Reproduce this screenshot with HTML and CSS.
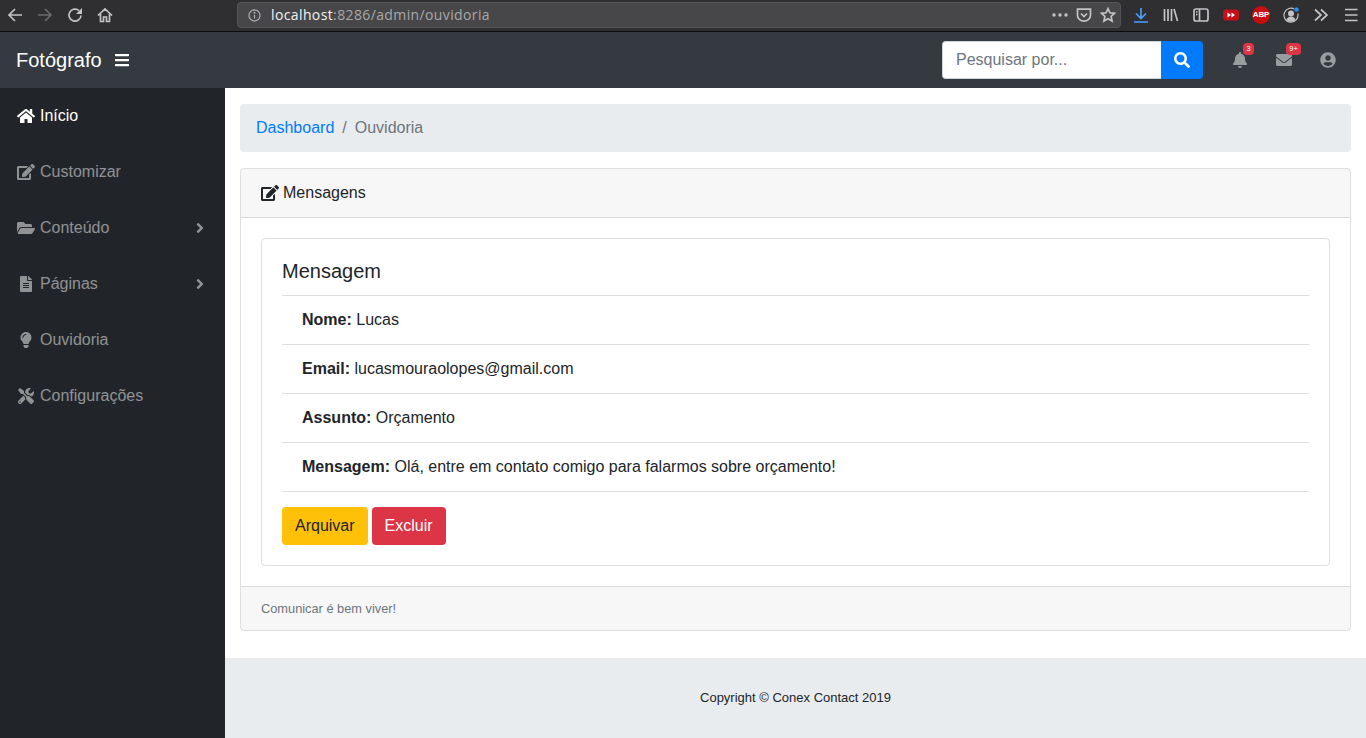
FILE: index.html
```html
<!DOCTYPE html>
<html lang="pt-BR">
<head>
<meta charset="utf-8">
<title>Ouvidoria</title>
<link rel="stylesheet" href="styles.css">
</head>
<body>
<svg class="sprite" xmlns="http://www.w3.org/2000/svg">
<symbol id="i-bars" viewBox="0 0 448 512"><path d="M16 132h416c8.837 0 16-7.163 16-16V76c0-8.837-7.163-16-16-16H16C7.163 60 0 67.163 0 76v40c0 8.837 7.163 16 16 16zm0 160h416c8.837 0 16-7.163 16-16v-40c0-8.837-7.163-16-16-16H16c-8.837 0-16 7.163-16 16v40c0 8.837 7.163 16 16 16zm0 160h416c8.837 0 16-7.163 16-16v-40c0-8.837-7.163-16-16-16H16c-8.837 0-16 7.163-16 16v40c0 8.837 7.163 16 16 16z"/></symbol>
<symbol id="i-search" viewBox="0 0 512 512"><path d="M505 442.7L405.3 343c-4.5-4.5-10.6-7-17-7H372c27.6-35.3 44-79.7 44-128C416 93.1 322.9 0 208 0S0 93.1 0 208s93.1 208 208 208c48.3 0 92.7-16.4 128-44v16.3c0 6.4 2.5 12.5 7 17l99.7 99.7c9.4 9.4 24.6 9.4 33.9 0l28.3-28.3c9.4-9.4 9.4-24.6.1-34zM208 336c-70.7 0-128-57.2-128-128 0-70.7 57.2-128 128-128 70.7 0 128 57.2 128 128 0 70.7-57.2 128-128 128z"/></symbol>
<symbol id="i-bell" viewBox="0 0 448 512"><path d="M224 512c35.32 0 63.97-28.65 63.97-64H160.03c0 35.35 28.65 64 63.97 64zm215.39-149.71c-19.32-20.76-55.47-51.99-55.47-154.29 0-77.7-54.48-139.9-127.94-155.16V32c0-17.67-14.32-32-31.98-32s-31.98 14.33-31.98 32v20.84C118.56 68.1 64.08 130.3 64.08 208c0 102.3-36.15 133.53-55.47 154.29-6 6.45-8.66 14.16-8.61 21.71.11 16.4 12.98 32 32.1 32h383.8c19.12 0 32-15.6 32.1-32 .05-7.55-2.61-15.27-8.61-21.71z"/></symbol>
<symbol id="i-envelope" viewBox="0 0 512 512"><path d="M502.3 190.8c3.9-3.1 9.7-.2 9.7 4.7V400c0 26.5-21.5 48-48 48H48c-26.5 0-48-21.5-48-48V195.6c0-5 5.7-7.8 9.7-4.7 22.4 17.4 52.1 39.5 154.1 113.6 21.1 15.4 56.7 47.8 92.2 47.6 35.7.3 72-32.8 92.3-47.6 102-74.1 131.6-96.3 154-113.7zM256 320c23.2.4 56.6-29.2 73.4-41.4 132.7-96.3 142.8-104.7 173.4-128.7 5.8-4.5 9.2-11.5 9.2-18.9v-19c0-26.5-21.5-48-48-48H48C21.5 64 0 85.5 0 112v19c0 7.4 3.4 14.3 9.2 18.9 30.6 23.9 40.7 32.4 173.4 128.7 16.8 12.2 50.2 41.8 73.4 41.4z"/></symbol>
<symbol id="i-user" viewBox="0 0 496 512"><path d="M248 8C111 8 0 119 0 256s111 248 248 248 248-111 248-248S385 8 248 8zm0 96c48.6 0 88 39.4 88 88s-39.4 88-88 88-88-39.4-88-88 39.4-88 88-88zm0 344c-58.7 0-111.3-26.6-146.5-68.2 18.8-35.4 55.6-59.8 98.5-59.8 2.4 0 4.8.4 7.1 1.1 13 4.2 26.6 6.9 40.9 6.9 14.3 0 28-2.7 40.9-6.9 2.3-.7 4.7-1.1 7.1-1.1 42.9 0 79.7 24.4 98.5 59.8C359.3 421.4 306.7 448 248 448z"/></symbol>
<symbol id="i-home" viewBox="0 0 576 512"><path d="M280.37 148.26L96 300.11V464a16 16 0 0 0 16 16l112.06-.29a16 16 0 0 0 15.92-16V368a16 16 0 0 1 16-16h64a16 16 0 0 1 16 16v95.64a16 16 0 0 0 16 16.05L464 480a16 16 0 0 0 16-16V300L295.67 148.26a12.19 12.19 0 0 0-15.3 0zM571.6 251.47L488 182.56V44.05a12 12 0 0 0-12-12h-56a12 12 0 0 0-12 12v72.61L318.47 43a48 48 0 0 0-61 0L4.34 251.47a12 12 0 0 0-1.6 16.9l25.5 31A12 12 0 0 0 45.15 301l235.22-193.74a12.19 12.19 0 0 1 15.3 0L530.9 301a12 12 0 0 0 16.9-1.6l25.5-31a12 12 0 0 0-1.7-16.93z"/></symbol>
<symbol id="i-edit" viewBox="0 0 576 512"><path d="M402.6 83.2l90.2 90.2c3.8 3.8 3.8 10 0 13.8L274.4 405.6l-92.8 10.3c-12.4 1.4-22.9-9.1-21.5-21.5l10.3-92.8L388.8 83.2c3.8-3.8 10-3.8 13.8 0zm162-22.9l-48.8-48.8c-15.2-15.2-39.9-15.2-55.2 0l-35.4 35.4c-3.8 3.8-3.8 10 0 13.8l90.2 90.2c3.8 3.8 10 3.8 13.8 0l35.4-35.4c15.2-15.3 15.2-40 0-55.2zM384 346.2V448H64V128h229.8c3.2 0 6.2-1.3 8.5-3.5l40-40c7.6-7.6 2.2-20.5-8.5-20.5H48C21.5 64 0 85.5 0 112v352c0 26.5 21.5 48 48 48h352c26.5 0 48-21.5 48-48V306.2c0-10.7-12.9-16-20.5-8.5l-40 40c-2.2 2.3-3.5 5.3-3.5 8.5z"/></symbol>
<symbol id="i-folder" viewBox="0 0 576 512"><path d="M572.694 292.093L500.27 416.248A63.997 63.997 0 0 1 444.989 448H45.025c-18.523 0-30.064-20.093-20.731-36.093l72.424-124.155A64 64 0 0 1 152 256h399.964c18.523 0 30.064 20.093 20.73 36.093zM152 224h328v-48c0-26.51-21.49-48-48-48H272l-64-64H48C21.49 64 0 85.49 0 112v278.046l69.077-118.418C86.214 242.25 117.989 224 152 224z"/></symbol>
<symbol id="i-file" viewBox="0 0 384 512"><path d="M224 136V0H24C10.7 0 0 10.7 0 24v464c0 13.3 10.7 24 24 24h336c13.3 0 24-10.7 24-24V160H248c-13.2 0-24-10.8-24-24zm64 236c0 6.6-5.4 12-12 12H108c-6.6 0-12-5.4-12-12v-8c0-6.6 5.4-12 12-12h168c6.6 0 12 5.4 12 12v8zm0-64c0 6.6-5.4 12-12 12H108c-6.6 0-12-5.4-12-12v-8c0-6.6 5.4-12 12-12h168c6.6 0 12 5.4 12 12v8zm0-72v8c0 6.6-5.4 12-12 12H108c-6.6 0-12-5.4-12-12v-8c0-6.6 5.4-12 12-12h168c6.6 0 12 5.4 12 12zm96-114.1v6.1H256V0h6.1c6.4 0 12.5 2.5 17 7l97.9 98c4.5 4.5 7 10.6 7 16.9z"/></symbol>
<symbol id="i-bulb" viewBox="0 0 352 512"><path d="M96.06 454.35c.01 6.29 1.87 12.45 5.36 17.69l17.09 25.69a31.99 31.99 0 0 0 26.64 14.28h61.71a31.99 31.99 0 0 0 26.64-14.28l17.09-25.69a31.989 31.989 0 0 0 5.36-17.69l.04-38.35H96.01l.05 38.35zM0 176c0 44.37 16.45 84.85 43.56 115.78 16.52 18.85 42.36 58.23 52.21 91.45.04.26.07.52.11.78h160.24c.04-.26.07-.51.11-.78 9.85-33.22 35.69-72.6 52.21-91.45C335.55 260.85 352 220.37 352 176 352 78.61 272.91-.3 175.45 0 73.44.31 0 82.97 0 176zm176-80c-44.11 0-80 35.89-80 80 0 8.84-7.16 16-16 16s-16-7.16-16-16c0-61.76 50.24-112 112-112 8.84 0 16 7.16 16 16s-7.16 16-16 16z"/></symbol>
<symbol id="i-tools" viewBox="0 0 512 512"><path d="M501.1 395.7L384 278.6c-23.1-23.1-57.6-27.6-85.4-13.9L192 158.1V96L64 0 0 64l96 128h62.1l106.6 106.6c-13.6 27.8-9.2 62.3 13.9 85.4l117.1 117.1c14.6 14.6 38.2 14.6 52.7 0l52.7-52.7c14.5-14.6 14.5-38.2 0-52.7zM331.7 225c28.3 0 54.9 11 74.9 31l19.4 19.4c15.8-6.9 30.8-16.5 43.8-29.5 37.1-37.1 49.7-89.3 37.9-136.7-2.2-9-13.5-12.1-20.1-5.5l-74.4 74.4-67.9-11.3L334 98.9l74.4-74.4c6.6-6.6 3.4-17.9-5.7-20.2-47.4-11.7-99.6.9-136.6 37.9-28.5 28.5-41.9 66.1-41.2 103.6l82.1 82.1c8.1-1.9 16.5-2.9 24.7-2.9zm-103.9 82l-56.7-56.7L18.7 402.8c-25 25-25 65.5 0 90.5s65.5 25 90.5 0l123.6-123.6c-7.6-19.9-9.9-41.6-5-62.7zM64 472c-13.2 0-24-10.8-24-24 0-13.3 10.7-24 24-24s24 10.7 24 24c0 13.2-10.7 24-24 24z"/></symbol>
<symbol id="i-angle" viewBox="0 0 256 512"><path d="M224.3 273l-136 136c-9.4 9.4-24.6 9.4-33.9 0l-22.6-22.6c-9.4-9.4-9.4-24.6 0-33.9l96.4-96.4-96.4-96.4c-9.4-9.4-9.4-24.6 0-33.9L54.3 103c9.4-9.4 24.6-9.4 33.9 0l136 136c9.5 9.4 9.5 24.6.1 34z"/></symbol>
</svg>

<header class="chrome">
  <div class="tool"><svg class="ff" viewBox="0 0 16 16"><path class="ln" d="M15 8H2M8 2L2 8l6 6"/></svg></div>
  <div class="tool dim"><svg class="ff" viewBox="0 0 16 16"><path class="ln" d="M1 8h13M8 2l6 6-6 6"/></svg></div>
  <div class="tool"><svg class="ff" viewBox="0 0 16 16"><path class="ln" d="M14 8.5A6 6 0 1 1 12 3.6"/><path class="fl" d="M15 1v6H9z"/></svg></div>
  <div class="tool"><svg class="ff" viewBox="0 0 16 16"><path class="ln" d="M1 8.5L8 2l7 6.5M3.5 7v7.5h3V10h3v4.5h3V7"/></svg></div>
  <div class="urlbar">
    <svg class="info" viewBox="0 0 14 14"><circle class="ln thin" cx="7" cy="7" r="6"/><path class="ln thin" d="M7 6.2v4"/><circle class="fl" cx="7" cy="4" r="1"/></svg>
    <span class="url"><span class="host">localhost</span>:8286/admin/ouvidoria</span>
    <span class="url-actions">
      <svg class="dots" viewBox="0 0 16 4"><circle class="fl" cx="2" cy="2" r="1.7"/><circle class="fl" cx="8" cy="2" r="1.7"/><circle class="fl" cx="14" cy="2" r="1.7"/></svg>
      <svg class="ff" viewBox="0 0 16 16"><path class="ln" d="M1.5 2.2h13v6a6.5 6 0 0 1-13 0zM5 6.5l3 3 3-3"/></svg>
      <svg class="ff" viewBox="0 0 16 16"><path class="ln" d="M8 1.6l1.9 4.2 4.6.5-3.4 3.1 1 4.6L8 11.7 3.9 14l1-4.6L1.500 6.300l4.600-.5z"/></svg>
    </span>
  </div>
  <div class="tools-right">
    <div class="tool"><svg class="ff blue" viewBox="0 0 16 16"><path class="ln" d="M8 1v10M3 6.500l5 5 5-5M1 15h14"/></svg></div>
    <div class="tool"><svg class="ff" viewBox="0 0 16 16"><path class="ln" d="M1.500 2v12M5 2v12M8.500 2v12M11 2l3.500 12"/></svg></div>
    <div class="tool"><svg class="ff" viewBox="0 0 16 16"><rect class="ln" x="1" y="2" width="14" height="12" rx="2"/><path class="ln" d="M6.500 2v12M3 5h1.500M3 7.500h1.500"/></svg></div>
    <div class="tool"><svg class="ff" viewBox="0 0 16 16"><rect class="yt" x="0" y="2.500" width="16" height="11" rx="3"/><path class="wh" d="M4.500 5.500l3.500 2.500-3.500 2.500zM8.500 5.500l3.500 2.500-3.500 2.500z"/></svg></div>
    <div class="tool"><span class="abp">ABP</span></div>
    <div class="tool"><svg class="ff" viewBox="0 0 16 16"><path class="ln thin" d="M12 2.400A7 7 0 1 0 14.800 6.500"/><circle class="fl" cx="8" cy="6.500" r="3"/><path class="fl" d="M3.500 13c.7-2.500 2.400-3.500 4.500-3.500s3.800 1 4.500 3.500a7 7 0 0 1-9 0z"/><circle class="bluedot" cx="13.500" cy="2.500" r="2.500"/></svg></div>
    <div class="tool"><svg class="ff" viewBox="0 0 16 16"><path class="ln" d="M2 2.500L8 8l-6 5.500M8 2.500L14 8l-6 5.500"/></svg></div>
    <div class="tool"><svg class="ff" viewBox="0 0 16 16"><path class="ln" d="M2 2.500h12.500M2 8h12.500M2 13.500h12.500"/></svg></div>
  </div>
</header>

<nav class="navbar">
  <a class="brand">Fotógrafo</a>
  <svg class="fa nav-toggle"><use href="#i-bars"/></svg>
  <form class="search">
    <input class="search-input" type="text" placeholder="Pesquisar por...">
    <span class="search-btn"><svg class="fa"><use href="#i-search"/></svg></span>
  </form>
  <ul class="nav-icons">
    <li class="nav-icon"><svg class="fa bell"><use href="#i-bell"/></svg><span class="badge badge-bell">3</span></li>
    <li class="nav-icon"><svg class="fa env"><use href="#i-envelope"/></svg><span class="badge badge-env">9+</span></li>
    <li class="nav-icon"><svg class="fa user"><use href="#i-user"/></svg></li>
  </ul>
</nav>

<div class="wrapper">
  <aside class="sidebar">
    <a class="side-link active"><svg class="fa fw"><use href="#i-home"/></svg><span>Início</span></a>
    <a class="side-link"><svg class="fa fw"><use href="#i-edit"/></svg><span>Customizar</span></a>
    <a class="side-link"><svg class="fa fw"><use href="#i-folder"/></svg><span>Conteúdo</span><svg class="fa caret"><use href="#i-angle"/></svg></a>
    <a class="side-link"><svg class="fa fw"><use href="#i-file"/></svg><span>Páginas</span><svg class="fa caret"><use href="#i-angle"/></svg></a>
    <a class="side-link"><svg class="fa fw"><use href="#i-bulb"/></svg><span>Ouvidoria</span></a>
    <a class="side-link"><svg class="fa fw"><use href="#i-tools"/></svg><span>Configurações</span></a>
  </aside>

  <main class="content">
    <div class="page">
      <ol class="breadcrumb">
        <li><a class="link">Dashboard</a></li>
        <li class="sep">/</li>
        <li class="crumb-now">Ouvidoria</li>
      </ol>

      <section class="card">
        <div class="card-header"><svg class="fa head-icon"><use href="#i-edit"/></svg><span>Mensagens</span></div>
        <div class="card-body">
          <div class="inner">
            <h5 class="inner-title">Mensagem</h5>
            <ul class="list">
              <li class="list-item"><b>Nome:</b> Lucas</li>
              <li class="list-item"><b>Email:</b> lucasmouraolopes@gmail.com</li>
              <li class="list-item"><b>Assunto:</b> Orçamento</li>
              <li class="list-item"><b>Mensagem:</b> Olá, entre em contato comigo para falarmos sobre orçamento!</li>
            </ul>
            <div class="actions">
              <a class="btn btn-warning">Arquivar</a>
              <a class="btn btn-danger">Excluir</a>
            </div>
          </div>
        </div>
        <div class="card-footer">Comunicar é bem viver!</div>
      </section>
    </div>
    <footer class="footer">Copyright © Conex Contact 2019</footer>
  </main>
</div>
</body>
</html>
```

FILE: styles.css
```css
* { box-sizing: border-box; }
html, body { height: 100%; }
body {
  margin: 0;
  height: 738px;
  overflow: hidden;
  display: flex;
  flex-direction: column;
  font-family: "Liberation Sans", Arial, sans-serif;
  font-size: 16px;
  line-height: 24px;
  color: #212529;
  background: #fff;
}
.sprite { width: 0; height: 0; position: absolute; }
.fa { fill: currentColor; display: block; }

/* Browser chrome */
.chrome {
  height: 32px;
  flex: none;
  display: flex;
  align-items: center;
  background: #2f2f31;
  border-bottom: 1px solid #0c0c0d;
  color: #c3c3c4;
  padding-bottom: 1px;
}
.tool { width: 30px; flex: none; display: flex; justify-content: center; align-items: center; }
.tool.dim { color: #6b6b6d; }
.ff { width: 16px; height: 16px; display: block; }
.ln { fill: none; stroke: currentColor; stroke-width: 1.7; }
.ln.thin { stroke-width: 1.2; }
.fl { fill: currentColor; stroke: none; }
.blue { color: #45a1ff; }
.yt { fill: #c4101a; }
.wh { fill: #fff; }
.bluedot { fill: #2f8fe8; stroke: #2f2f31; stroke-width: .6; }
.abp {
  width: 18px;
  height: 18px;
  border-radius: 50%;
  background: #c70d0d;
  color: #fff;
  font-size: 8px;
  font-weight: 700;
  line-height: 18px;
  text-align: center;
  letter-spacing: -.2px;
}
.urlbar {
  flex: 1;
  height: 26px;
  margin: 0 5px 0 117px;
  padding: 0 4px 0 10px;
  display: flex;
  align-items: center;
  background: #474749;
  border: 1px solid #555557;
  border-radius: 4px;
}
.info { width: 13px; height: 13px; display: block; color: #b5b5b7; }
.url {
  margin-left: 10px;
  font-family: "Open Sans", sans-serif;
  font-size: 14px;
  color: #a8a8aa;
  letter-spacing: .38px;
  white-space: nowrap;
}
.host { color: #f2f2f2; }
.url-actions { margin-left: auto; display: flex; align-items: center; gap: 8px; }
.dots { width: 16px; height: 4px; display: block; }
.tools-right { display: flex; flex: none; }

/* Navbar */
.navbar {
  height: 56px;
  flex: none;
  display: flex;
  align-items: center;
  padding: 0 16px;
  background: #343a40;
  color: #fff;
}
.brand { font-size: 20px; line-height: 30px; margin-right: 13px; }
.nav-toggle { width: 14px; height: 16px; }
.search { display: flex; margin-left: auto; margin-right: 15px; height: 38px; }
.search-input {
  width: 219px;
  height: 38px;
  padding: 6px 13px;
  border: 1px solid #ced4da;
  border-right: 0;
  border-radius: 4px 0 0 4px;
  font: 16px/24px "Liberation Sans", Arial, sans-serif;
  color: #495057;
  background: #fff;
}
.search-input::placeholder { color: #6c757d; opacity: 1; }
.search-btn {
  width: 42px;
  background: #007bff;
  border-radius: 0 4px 4px 0;
  display: flex;
  align-items: center;
  justify-content: center;
}
.search-btn .fa { width: 16px; height: 16px; }
.nav-icons {
  list-style: none;
  margin: 0;
  padding: 0;
  display: flex;
  align-items: center;
  color: rgba(255, 255, 255, .5);
}
.nav-icon {
  position: relative;
  width: 44px;
  display: flex;
  justify-content: center;
}
.bell { width: 14px; height: 16px; }
.env { width: 16px; height: 16px; }
.user { width: 16px; height: 16px; }
.badge {
  position: absolute;
  top: -9px;
  height: 12px;
  background: #dc3545;
  color: #fff;
  font-size: 7.500px;
  font-weight: 400;
  line-height: 12px;
  text-align: center;
  border-radius: 4px;
}
.badge-bell { left: 25px; width: 11px; }
.badge-env { left: 24px; width: 15px; }

/* Layout */
.wrapper { flex: 1; display: flex; min-height: 0; }
.sidebar { width: 225px; flex: none; background: #212529; }
.side-link {
  height: 56px;
  padding: 0 16px;
  display: flex;
  align-items: center;
  color: rgba(255, 255, 255, .5);
}
.side-link.active { color: #fff; }
.fw { width: 20px; height: 16px; margin-right: 4px; }
.caret { width: 8px; height: 16px; margin-left: auto; margin-right: 4px; width: 10px; }

.content { flex: 1; display: flex; flex-direction: column; min-width: 0; }
.page { flex: 1; padding: 16px 15px 0; }
.breadcrumb {
  list-style: none;
  margin: 0 0 16px;
  padding: 12px 16px;
  height: 48px;
  display: flex;
  background: #e9ecef;
  border-radius: 4px;
  color: #6c757d;
}
.link { color: #007bff; }
.sep { padding: 0 8px; }

/* Cards */
.card {
  border: 1px solid rgba(0, 0, 0, .125);
  border-radius: 4px;
}
.card-header {
  height: 49px;
  padding: 0 20px;
  display: flex;
  align-items: center;
  background: rgba(0, 0, 0, .03);
  border-bottom: 1px solid rgba(0, 0, 0, .125);
  color: #212529;
}
.head-icon { width: 18px; height: 16px; margin-right: 4px; }
.card-body { padding: 20px; }
.inner {
  border: 1px solid rgba(0, 0, 0, .125);
  border-radius: 4px;
  padding: 20px;
}
.inner-title {
  margin: 0 0 12px;
  font-size: 20px;
  line-height: 24px;
  font-weight: 400;
}
.list { list-style: none; margin: 0; padding: 0; border-top: 1px solid rgba(0, 0, 0, .125); }
.list-item {
  padding: 12px 20px;
  border-bottom: 1px solid rgba(0, 0, 0, .125);
}
.actions { margin-top: 15px; display: flex; gap: 4px; }
.btn {
  height: 38px;
  padding: 7px 13px;
  border-radius: 4px;
  line-height: 24px;
}
.btn-warning { background: #ffc107; color: #212529; }
.btn-danger { background: #dc3545; color: #fff; }
.card-footer {
  padding: 12px 20px;
  font-size: 12.800px;
  line-height: 19.200px;
  color: #6c757d;
  background: rgba(0, 0, 0, .03);
  border-top: 1px solid rgba(0, 0, 0, .125);
}

.footer {
  flex: none;
  height: 80px;
  display: flex;
  align-items: center;
  justify-content: center;
  background: #e9ecef;
  font-size: 13px;
  color: #212529;
}
```
